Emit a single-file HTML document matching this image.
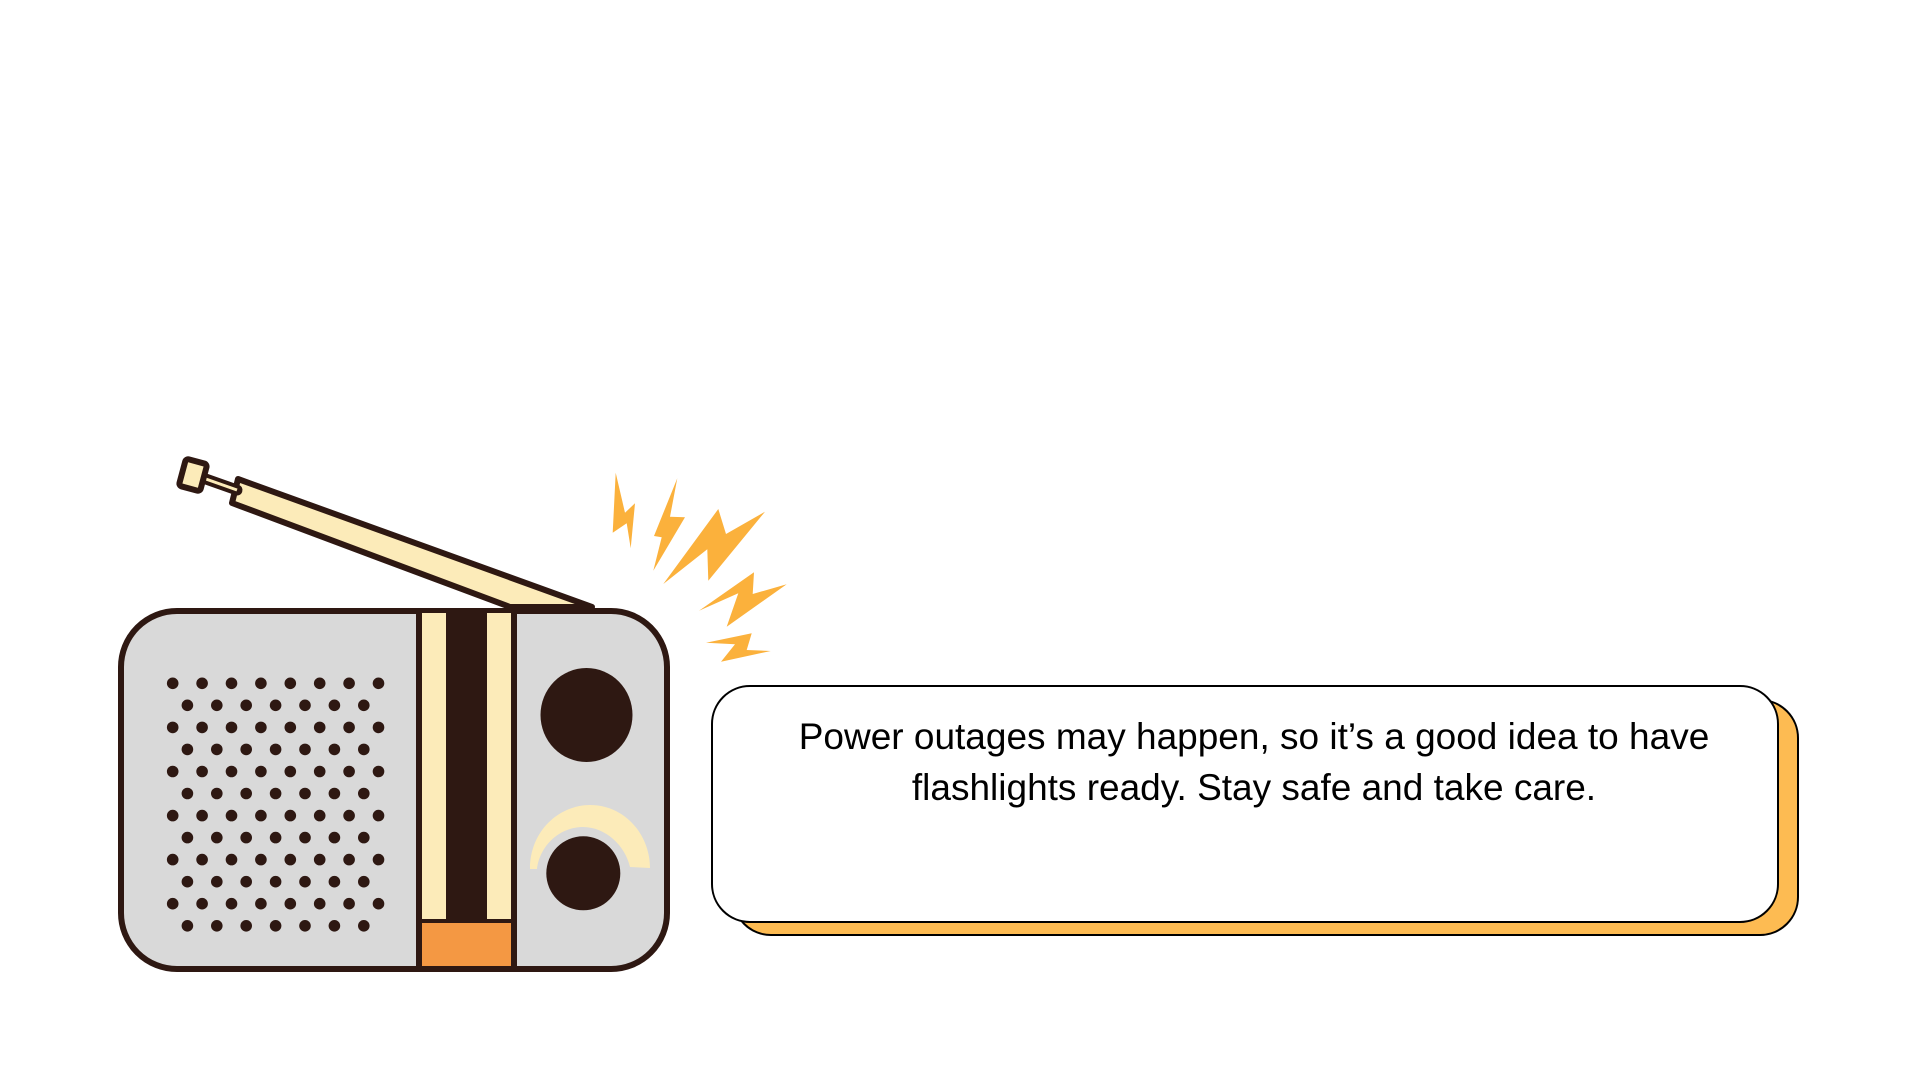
<!DOCTYPE html>
<html><head><meta charset="utf-8"><style>
html,body{margin:0;padding:0;background:#fff;width:1920px;height:1080px;overflow:hidden}
svg{display:block}
</style></head><body>
<svg width="1920" height="1080" viewBox="0 0 1920 1080" xmlns="http://www.w3.org/2000/svg">
<polygon points="238,479 232,503 510,607 592,607" fill="#fcebb9" stroke="#2e1812" stroke-width="6" stroke-linejoin="round"/>
<line x1="203" y1="478" x2="237" y2="490" stroke="#2e1812" stroke-width="11" stroke-linecap="round"/>
<line x1="203" y1="478" x2="237" y2="490" stroke="#fcebb9" stroke-width="3"/>
<rect x="182" y="461" width="22" height="28" rx="3" fill="#fcebb9" stroke="#2e1812" stroke-width="6" transform="rotate(15 193 475)"/>
<rect x="121" y="611" width="546" height="358" rx="56" fill="#d9d9d9" stroke="#2e1812" stroke-width="6"/>
<rect x="421" y="613" width="25" height="308" fill="#fcebb9"/>
<rect x="446" y="613" width="41" height="308" fill="#2e1812"/>
<rect x="487" y="613" width="25" height="308" fill="#fcebb9"/>
<rect x="421" y="923" width="91" height="43" fill="#f49843"/>
<line x1="421" y1="921" x2="512" y2="921" stroke="#2e1812" stroke-width="4"/>
<line x1="419" y1="612" x2="419" y2="968" stroke="#2e1812" stroke-width="6"/>
<line x1="514" y1="612" x2="514" y2="968" stroke="#2e1812" stroke-width="6"/>
<g fill="#2e1812">
<circle cx="172.7" cy="683.3" r="5.8"/><circle cx="202.1" cy="683.3" r="5.8"/><circle cx="231.5" cy="683.3" r="5.8"/><circle cx="260.9" cy="683.3" r="5.8"/><circle cx="290.3" cy="683.3" r="5.8"/><circle cx="319.7" cy="683.3" r="5.8"/><circle cx="349.1" cy="683.3" r="5.8"/><circle cx="378.5" cy="683.3" r="5.8"/>
<circle cx="187.4" cy="705.3" r="5.8"/><circle cx="216.8" cy="705.3" r="5.8"/><circle cx="246.2" cy="705.3" r="5.8"/><circle cx="275.6" cy="705.3" r="5.8"/><circle cx="305" cy="705.3" r="5.8"/><circle cx="334.4" cy="705.3" r="5.8"/><circle cx="363.8" cy="705.3" r="5.8"/>
<circle cx="172.7" cy="727.4" r="5.8"/><circle cx="202.1" cy="727.4" r="5.8"/><circle cx="231.5" cy="727.4" r="5.8"/><circle cx="260.9" cy="727.4" r="5.8"/><circle cx="290.3" cy="727.4" r="5.8"/><circle cx="319.7" cy="727.4" r="5.8"/><circle cx="349.1" cy="727.4" r="5.8"/><circle cx="378.5" cy="727.4" r="5.8"/>
<circle cx="187.4" cy="749.4" r="5.8"/><circle cx="216.8" cy="749.4" r="5.8"/><circle cx="246.2" cy="749.4" r="5.8"/><circle cx="275.6" cy="749.4" r="5.8"/><circle cx="305" cy="749.4" r="5.8"/><circle cx="334.4" cy="749.4" r="5.8"/><circle cx="363.8" cy="749.4" r="5.8"/>
<circle cx="172.7" cy="771.5" r="5.8"/><circle cx="202.1" cy="771.5" r="5.8"/><circle cx="231.5" cy="771.5" r="5.8"/><circle cx="260.9" cy="771.5" r="5.8"/><circle cx="290.3" cy="771.5" r="5.8"/><circle cx="319.7" cy="771.5" r="5.8"/><circle cx="349.1" cy="771.5" r="5.8"/><circle cx="378.5" cy="771.5" r="5.8"/>
<circle cx="187.4" cy="793.5" r="5.8"/><circle cx="216.8" cy="793.5" r="5.8"/><circle cx="246.2" cy="793.5" r="5.8"/><circle cx="275.6" cy="793.5" r="5.8"/><circle cx="305" cy="793.5" r="5.8"/><circle cx="334.4" cy="793.5" r="5.8"/><circle cx="363.8" cy="793.5" r="5.8"/>
<circle cx="172.7" cy="815.6" r="5.8"/><circle cx="202.1" cy="815.6" r="5.8"/><circle cx="231.5" cy="815.6" r="5.8"/><circle cx="260.9" cy="815.6" r="5.8"/><circle cx="290.3" cy="815.6" r="5.8"/><circle cx="319.7" cy="815.6" r="5.8"/><circle cx="349.1" cy="815.6" r="5.8"/><circle cx="378.5" cy="815.6" r="5.8"/>
<circle cx="187.4" cy="837.6" r="5.8"/><circle cx="216.8" cy="837.6" r="5.8"/><circle cx="246.2" cy="837.6" r="5.8"/><circle cx="275.6" cy="837.6" r="5.8"/><circle cx="305" cy="837.6" r="5.8"/><circle cx="334.4" cy="837.6" r="5.8"/><circle cx="363.8" cy="837.6" r="5.8"/>
<circle cx="172.7" cy="859.6" r="5.8"/><circle cx="202.1" cy="859.6" r="5.8"/><circle cx="231.5" cy="859.6" r="5.8"/><circle cx="260.9" cy="859.6" r="5.8"/><circle cx="290.3" cy="859.6" r="5.8"/><circle cx="319.7" cy="859.6" r="5.8"/><circle cx="349.1" cy="859.6" r="5.8"/><circle cx="378.5" cy="859.6" r="5.8"/>
<circle cx="187.4" cy="881.7" r="5.8"/><circle cx="216.8" cy="881.7" r="5.8"/><circle cx="246.2" cy="881.7" r="5.8"/><circle cx="275.6" cy="881.7" r="5.8"/><circle cx="305" cy="881.7" r="5.8"/><circle cx="334.4" cy="881.7" r="5.8"/><circle cx="363.8" cy="881.7" r="5.8"/>
<circle cx="172.7" cy="903.7" r="5.8"/><circle cx="202.1" cy="903.7" r="5.8"/><circle cx="231.5" cy="903.7" r="5.8"/><circle cx="260.9" cy="903.7" r="5.8"/><circle cx="290.3" cy="903.7" r="5.8"/><circle cx="319.7" cy="903.7" r="5.8"/><circle cx="349.1" cy="903.7" r="5.8"/><circle cx="378.5" cy="903.7" r="5.8"/>
<circle cx="187.4" cy="925.8" r="5.8"/><circle cx="216.8" cy="925.8" r="5.8"/><circle cx="246.2" cy="925.8" r="5.8"/><circle cx="275.6" cy="925.8" r="5.8"/><circle cx="305" cy="925.8" r="5.8"/><circle cx="334.4" cy="925.8" r="5.8"/><circle cx="363.8" cy="925.8" r="5.8"/>
<ellipse cx="586.5" cy="715" rx="46" ry="47"/>
<circle cx="583.3" cy="873.3" r="37"/>
</g>
<path d="M530,869 C530,830 560,805 590,805 C625,805 650,835 650,868 L630,867 C625,845 605,827 583,827 C560,827 540,845 537,869 Z" fill="#fcebb9"/>
<g fill="#fbb13c">
<polygon points="615.7,472.7 625,512.7 635,503.3 630.7,548.3 626.7,523.3 612.7,532.7"/>
<polygon points="677.3,478.3 670,516.7 685,517.3 653.3,570.7 661.7,537.3 654,536"/>
<polygon points="663.3,584 718.3,509 726,534 765,511.7 708.3,580.7 707.3,549.3"/>
<polygon points="699,610.7 754,572.3 752.7,594 786.7,584.3 726.7,626.7 738.3,593.3"/>
<polygon points="706,642.7 751.7,633.3 746.7,650 770.7,651 721,661.7 735,644.3"/>
</g>
<rect x="733" y="700" width="1065" height="235" rx="38" fill="#fdbb52" stroke="#000" stroke-width="2"/>
<rect x="712" y="686" width="1066" height="236" rx="38" fill="#fff" stroke="#000" stroke-width="2"/>
<g font-family="Liberation Sans, Arial, sans-serif" font-size="37" fill="#000" text-anchor="middle">
<text x="1254" y="749">Power outages may happen, so it’s a good idea to have</text>
<text x="1254" y="800">flashlights ready. Stay safe and take care.</text>
</g>
</svg>
</body></html>
